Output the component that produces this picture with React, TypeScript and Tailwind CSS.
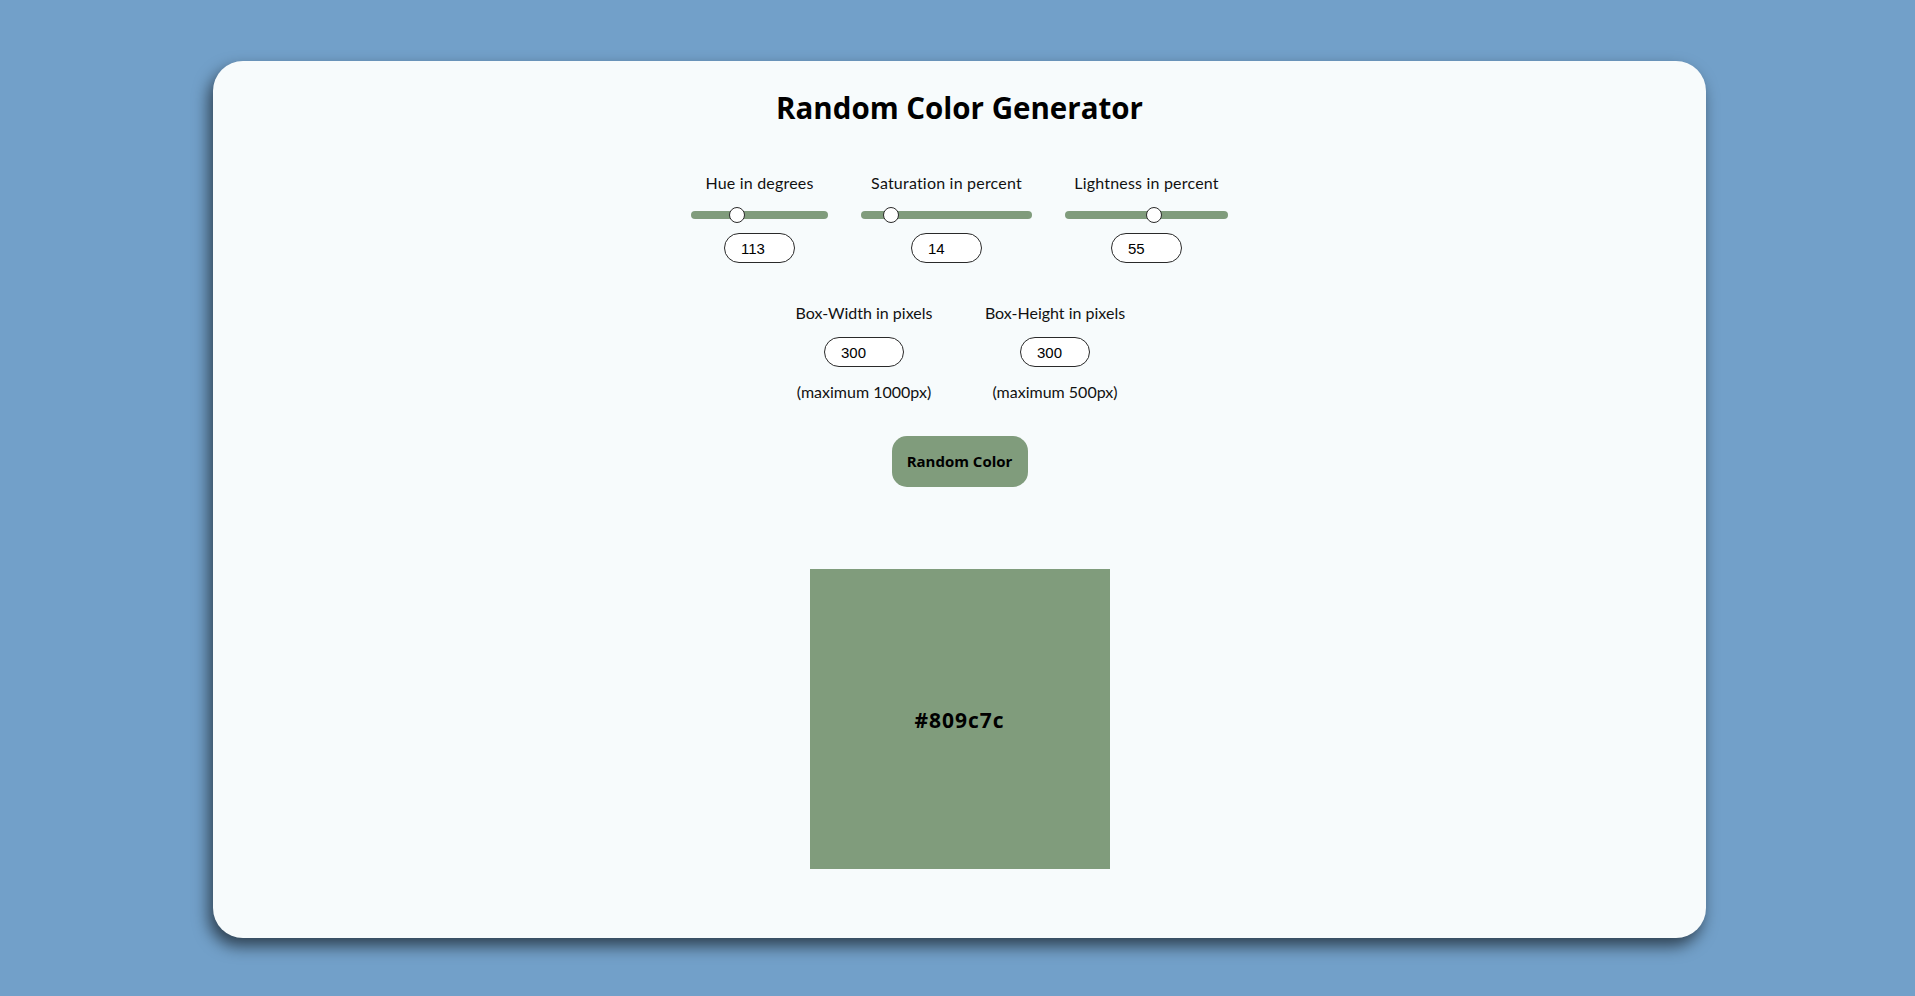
import React from "react";

const color = "#809c7c";

type SliderField = {
    label: string;
    value: number;
    max: number;
    width: string;
};

const sliders: SliderField[] = [
    { label: "Hue in degrees", value: 113, max: 360, width: "w-[137px]" },
    { label: "Saturation in percent", value: 14, max: 100, width: "w-[171px]" },
    { label: "Lightness in percent", value: 55, max: 100, width: "w-[163px]" },
];

function NumberBox({ value, width }: { value: number; width: string }) {
    return (
        <input
            readOnly
            value={value}
            className={`${width} h-[30px] rounded-full border border-[#2a2a2a] bg-white pl-[16px] text-[15px] text-black outline-none font-['Liberation_Sans',Arial,sans-serif]`}
        />
    );
}

function Slider({ label, value, max, width }: SliderField) {
    const pct = value / max;
    return (
        <div className={`flex ${width} flex-col items-center`}>
            <span className="h-[20px] whitespace-nowrap text-[16px] leading-[20px] tracking-[0.2px] text-[#111]">{label}</span>
            <div className="relative mt-[14px] h-[16px] w-full">
                <div className="absolute left-0 right-0 top-[4px] h-[8px] rounded-full bg-[#809c7c]" />
                <div
                    className="absolute top-0 h-[16px] w-[16px] rounded-full border-[1.5px] border-[#2a2a2a] bg-white"
                    style={{ left: `calc(${pct} * (100% - 16px))` }}
                />
            </div>
            <div className="mt-[10px]">
                <NumberBox value={value} width="w-[71px]" />
            </div>
        </div>
    );
}

function SizeField({ label, value, note, inputWidth }: { label: string; value: number; note: string; inputWidth: string }) {
    return (
        <div className="flex w-[140px] flex-col items-center">
            <span className="h-[20px] whitespace-nowrap text-[16px] leading-[20px] text-[#111]">{label}</span>
            <div className="mt-[14px]">
                <NumberBox value={value} width={inputWidth} />
            </div>
            <span className="mt-[15px] h-[20px] whitespace-nowrap text-[16px] leading-[20px] text-[#111]">{note}</span>
        </div>
    );
}

export default function App() {
    return (
        <div className="min-h-[996px] w-full bg-[#72a0c9] pt-[61px] font-['Lato','Open_Sans',sans-serif]">
            <main className="ml-[213px] flex h-[877px] w-[1493px] flex-col items-center rounded-[30px] bg-[#f7fbfc] pt-[30px] shadow-[-4px_8px_16px_rgba(0,0,0,0.6)]">
                <h1 className="h-[34px] font-['Open_Sans',sans-serif] text-[29.5px] font-bold leading-[34px] text-black">
                    Random Color Generator
                </h1>

                <div className="mt-[48px] flex justify-center gap-[33px]">
                    {sliders.map((s) => (
                        <Slider key={s.label} {...s} />
                    ))}
                </div>

                <div className="mt-[40px] flex justify-center gap-[51px]">
                    <SizeField label="Box-Width in pixels" value={300} note="(maximum 1000px)" inputWidth="w-[80px]" />
                    <SizeField label="Box-Height in pixels" value={300} note="(maximum 500px)" inputWidth="w-[70px]" />
                </div>

                <button className="mt-[34px] h-[51px] w-[136px] rounded-[15px] bg-[#809c7c] font-['Open_Sans',sans-serif] text-[15px] font-bold text-black">
                    Random Color
                </button>

                <div
                    className="mt-[82px] flex h-[300px] w-[300px] items-center justify-center"
                    style={{ backgroundColor: color }}
                >
                    <span className="mt-[4px] font-['Open_Sans',sans-serif] text-[21px] font-bold tracking-[1px] text-black">{color}</span>
                </div>
            </main>
        </div>
    );
}
